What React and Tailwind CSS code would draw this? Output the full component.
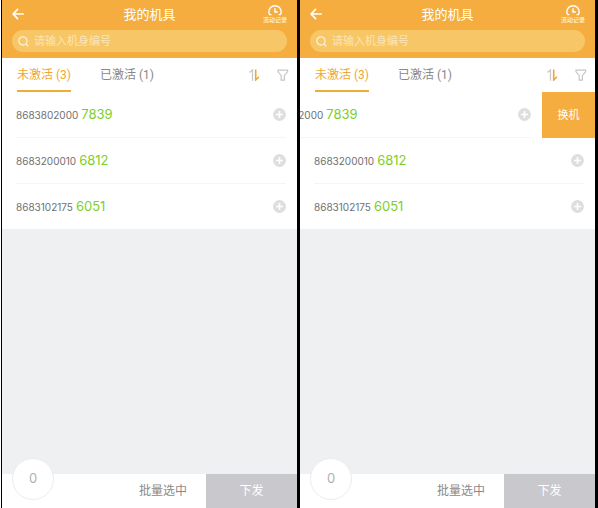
import React, { useState } from "react";

const devices = [
  { prefix: "8683802000", suffix: "7839" },
  { prefix: "8683200010", suffix: "6812" },
  { prefix: "8683102175", suffix: "6051" },
];

const BackIcon = () => (
  <svg className="w-3 h-3" viewBox="0 0 12 12" fill="none" stroke="currentColor" strokeWidth="1.7">
    <path d="M11.8 6H1.2M6 .8L1.2 6L6 11.2" />
  </svg>
);

const RecordIcon = () => (
  <svg className="w-[14px] h-[11px]" viewBox="0 0 14 11" fill="none" stroke="currentColor">
    <path d="M3.4 9.6H1.7C1 8.6 .8 7.8 .8 6.9A6.2 6.2 0 0 1 13.2 6.9C13.2 7.8 13 8.6 12.3 9.6H10.6" strokeWidth="1.4" />
    <path d="M7 3.2V7H9.8" strokeWidth="1.4" />
  </svg>
);

const SearchIcon = () => (
  <svg className="w-[11px] h-[11px] shrink-0 text-[#fdf0d3]" viewBox="0 0 11 11" fill="none" stroke="currentColor" strokeWidth="1.3">
    <circle cx="4.9" cy="4.9" r="4.1" />
    <path d="M7.8 7.8L10.2 10.2" />
  </svg>
);

const SortIcon = () => (
  <svg className="w-3 h-3" viewBox="0 0 12 12" fill="none">
    <path d="M.4 3.6L3.5 1V11.8" stroke="#c9c9cc" strokeWidth="1.3" />
    <path d="M6.7 .4V11L9.9 7.8" stroke="#efa733" strokeWidth="1.6" />
  </svg>
);

const FilterIcon = () => (
  <svg className="w-3 h-3" viewBox="0 0 12 12" fill="none" stroke="#c6c6ca" strokeWidth="1.2">
    <path d="M1 1.2H10.6V2.8L7.4 6.4V11.2H4.2V6.4L1 2.8Z" />
  </svg>
);

const PlusIcon = () => (
  <svg className="w-[13px] h-[13px]" viewBox="0 0 13 13">
    <circle cx="6.5" cy="6.5" r="6.4" fill="#dedee0" />
    <path d="M6.5 3V10M3 6.5H10" stroke="#fff" strokeWidth="1.6" />
  </svg>
);

const DeviceRow = ({ device, swiped, last }) => (
  <li className="flex justify-end overflow-hidden">
    <div className="w-full shrink-0 pl-[14px] pr-[11px]">
      <div
        className={`flex items-center justify-between ${
          last ? "h-[45px]" : "h-[46px] border-b border-[#f5f5f6]"
        }`}
      >
        <p className="flex items-baseline gap-[3px] leading-4">
          <span className="text-[10px] text-[#707070]">{device.prefix}</span>
          <span className="text-[13px] text-[#7bd02b]">{device.suffix}</span>
        </p>
        <button type="button" aria-label="添加">
          <PlusIcon />
        </button>
      </div>
    </div>
    {swiped && (
      <button type="button" className="w-[53px] shrink-0 bg-[#f5ad40] text-[11px] text-white">
        换机
      </button>
    )}
  </li>
);

const Phone = ({ swipedIndex }) => {
  const [keyword, setKeyword] = useState("");

  return (
    <section className="flex min-w-0 flex-1 flex-col bg-[#eff0f2]">
      {/* Header */}
      <header className="h-[58px] bg-[#f5ad40] px-[10px] text-white">
        <div className="grid h-[30px] grid-cols-3 items-center pb-[2px]">
          <button type="button" aria-label="返回" className="justify-self-start">
            <BackIcon />
          </button>
          <h1 className="text-center text-[13px] leading-4">我的机具</h1>
          <button type="button" className="flex flex-col items-center justify-self-end">
            <RecordIcon />
            <span className="text-[6px] leading-2">流动记录</span>
          </button>
        </div>
        <label className="flex h-[22px] items-center gap-[5px] rounded-full bg-[#f7c767] px-[6px]">
          <SearchIcon />
          <input
            type="text"
            aria-label="搜索"
            placeholder="请输入机身编号"
            value={keyword}
            onChange={(e) => setKeyword(e.target.value)}
            className="min-w-0 flex-1 bg-transparent text-[11px] leading-4 outline-none placeholder:text-[#fbe4b6]"
          />
        </label>
      </header>

      {/* Tabs */}
      <div className="flex h-[34px] items-stretch bg-white pl-[15px] pr-2 font-['Roboto','Noto_Sans_CJK_SC',sans-serif]">
        <button type="button" className="border-b-2 border-[#efad38] pt-[2px] text-[12px] text-[#efa733]">
          未激活 (3)
        </button>
        <button type="button" className="ml-[29px] border-b-2 border-transparent pt-[2px] text-[12px] text-[#888888]">
          已激活 (1)
        </button>
        <div className="ml-auto flex items-center gap-4">
          <button type="button" aria-label="排序">
            <SortIcon />
          </button>
          <button type="button" aria-label="筛选">
            <FilterIcon />
          </button>
        </div>
      </div>

      <ul className="bg-white">
        {devices.map((device, index) => (
          <DeviceRow
            key={device.prefix}
            device={device}
            swiped={index === swipedIndex}
            last={index === devices.length - 1}
          />
        ))}
      </ul>

      {/* Bottom bar */}
      <footer className="relative mt-auto flex h-[34px] items-stretch justify-end bg-white">
        <div className="absolute bottom-2 left-[10px] flex h-[42px] w-[42px] items-center justify-center rounded-full border border-[#ededf0] bg-white text-[13px] text-[#b0b0b0]">
          0
        </div>
        <button type="button" className="mr-[19px] text-[12px] text-[#8a8a8a]">
          批量选中
        </button>
        <button type="button" className="w-[91px] bg-[#c9c9cd] text-[12px] text-white">
          下发
        </button>
      </footer>
    </section>
  );
};

const App = () => {
  return (
    <main className="flex min-h-screen gap-[3px] border-l border-white bg-black pl-px pr-[3px] font-['Inter','Noto_Sans_CJK_SC',sans-serif]">
      <Phone swipedIndex={-1} />
      <Phone swipedIndex={0} />
    </main>
  );
};

export default App;
